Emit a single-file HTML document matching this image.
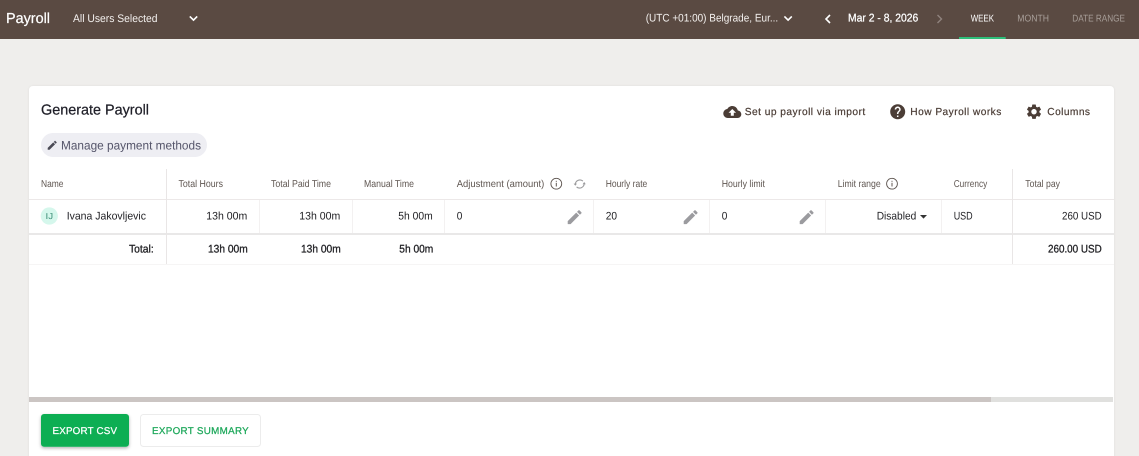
<!DOCTYPE html>
<html lang="en">
<head>
<meta charset="utf-8">
<title>Payroll</title>
<style>
html,body{margin:0;padding:0;width:1139px;height:456px;overflow:hidden;background:#efeeec}
svg{display:block}
text{font-family:"Liberation Sans",sans-serif;white-space:pre;text-rendering:geometricPrecision}
.h{font-size:10px;fill:#5f5651}
.r{font-size:11px;fill:#222226}
.m{stroke:currentColor;stroke-width:.25px}
.t{font-size:11px;fill:#222226;stroke:#222226;stroke-width:.3px}
.a{font-size:10.2px;fill:#4b3d36;stroke:#4b3d36;stroke-width:.2px}
.d{stroke:#f3f1f1;stroke-width:1}
</style>
</head>
<body>
<svg width="1139" height="456" viewBox="0 0 1139 456" xmlns="http://www.w3.org/2000/svg">
<defs>
<path id="pen" d="M3 17.25V21h3.75L17.81 9.94l-3.75-3.75L3 17.25zM20.71 7.04c.39-.39.39-1.02 0-1.41l-2.34-2.34c-.39-.39-1.02-.39-1.41 0l-1.83 1.83 3.75 3.75 1.83-1.83z"/>
<filter id="cs" x="-5%" y="-5%" width="110%" height="110%"><feDropShadow dx="0" dy="0" stdDeviation="1" flood-color="#000" flood-opacity=".07"/></filter>
<filter id="bs" x="-20%" y="-30%" width="140%" height="170%"><feDropShadow dx="0" dy="1.5" stdDeviation="1.5" flood-color="#000" flood-opacity=".3"/></filter>
</defs>

<rect width="1139" height="456" fill="#efeeec"/>

<!-- top bar -->
<rect width="1139" height="39" fill="#5a4a42"/>
<text x="6" y="23" font-size="14.5" fill="#fff" class="m" textLength="44" lengthAdjust="spacingAndGlyphs" style="color:#fff">Payroll</text>
<text x="73" y="22" font-size="11" fill="#f4f1ef" textLength="84.5" lengthAdjust="spacingAndGlyphs">All Users Selected</text>
<path d="M189.8 16.4l3.7 3.7 3.7-3.7" fill="none" stroke="#fff" stroke-width="1.6"/>
<text x="645.7" y="21.7" font-size="11" fill="#f4f1ef" textLength="132.5" lengthAdjust="spacingAndGlyphs">(UTC +01:00) Belgrade, Eur...</text>
<path d="M784.4 16.4l3.7 3.7 3.7-3.7" fill="none" stroke="#fff" stroke-width="1.6"/>
<path d="M830 15l-4 4 4 4" fill="none" stroke="#fff" stroke-width="1.6"/>
<text x="848" y="21.7" font-size="11.2" fill="#fff" class="m" textLength="70.3" lengthAdjust="spacingAndGlyphs" style="color:#fff">Mar 2 - 8, 2026</text>
<path d="M937.5 15l4 4-4 4" fill="none" stroke="#8f837d" stroke-width="1.4"/>
<text x="970.7" y="21.5" font-size="9.8" fill="#fff" textLength="23.3" lengthAdjust="spacingAndGlyphs">WEEK</text>
<text x="1017.3" y="21.5" font-size="9.8" fill="#a89f99" textLength="31.7" lengthAdjust="spacingAndGlyphs">MONTH</text>
<text x="1072.3" y="21.5" font-size="9.8" fill="#a89f99" textLength="52.7" lengthAdjust="spacingAndGlyphs">DATE RANGE</text>
<rect x="959" y="37" width="46.7" height="2" fill="#2dbf7a"/>

<!-- card -->
<rect x="29" y="86" width="1085" height="380" rx="4" fill="#fff" filter="url(#cs)"/>
<text x="41" y="114.3" font-size="14.5" fill="#1f1f28" class="m" textLength="108" lengthAdjust="spacingAndGlyphs" style="color:#1f1f28">Generate Payroll</text>

<rect x="41" y="133" width="166" height="24" rx="12" fill="#eeeef3"/>
<use href="#pen" transform="translate(46.2 139.3) scale(.5)" fill="#4a4a55"/>
<text x="61" y="149.5" font-size="12.3" fill="#55556a" textLength="140" lengthAdjust="spacingAndGlyphs">Manage payment methods</text>

<!-- actions -->
<path transform="translate(723.3 103) scale(.75)" fill="#4b3d36" d="M19.35 10.04C18.67 6.59 15.64 4 12 4 9.11 4 6.6 5.64 5.35 8.04 2.34 8.36 0 10.91 0 14c0 3.31 2.69 6 6 6h13c2.76 0 5-2.24 5-5 0-2.64-2.05-4.78-4.65-4.96zM14 13v4h-4v-4H7l5-5 5 5h-3z"/>
<text x="744.7" y="115" class="a" textLength="120.5">Set up payroll via import</text>
<path transform="translate(888.7 102.7) scale(.75)" fill="#4b3d36" d="M12 2C6.48 2 2 6.48 2 12s4.48 10 10 10 10-4.48 10-10S17.52 2 12 2zm1 17h-2v-2h2v2zm2.07-7.75l-.9.92C13.45 12.9 13 13.5 13 15h-2v-.5c0-1.1.45-2.1 1.17-2.83l1.24-1.26c.37-.36.59-.86.59-1.41 0-1.1-.9-2-2-2s-2 .9-2 2H8c0-2.21 1.79-4 4-4s4 1.79 4 4c0 .88-.36 1.68-.93 2.25z"/>
<text x="910.3" y="115" class="a" textLength="91">How Payroll works</text>
<path transform="translate(1025 102.7) scale(.75)" fill="#4b3d36" d="M19.14 12.94c.04-.3.06-.61.06-.94 0-.32-.02-.64-.07-.94l2.03-1.58c.18-.14.23-.41.12-.61l-1.92-3.32c-.12-.22-.37-.29-.59-.22l-2.39.96c-.5-.38-1.03-.7-1.62-.94l-.36-2.54c-.04-.24-.24-.41-.48-.41h-3.84c-.24 0-.43.17-.47.41l-.36 2.54c-.59.24-1.13.57-1.62.94l-2.39-.96c-.22-.08-.47 0-.59.22L2.74 8.87c-.12.21-.08.47.12.61l2.03 1.58c-.05.3-.09.63-.09.94s.02.64.07.94l-2.03 1.58c-.18.14-.23.41-.12.61l1.92 3.32c.12.22.37.29.59.22l2.39-.96c.5.38 1.03.7 1.62.94l.36 2.54c.05.24.24.41.48.41h3.84c.24 0 .44-.17.47-.41l.36-2.54c.59-.24 1.13-.56 1.62-.94l2.39.96c.22.08.47 0 .59-.22l1.92-3.32c.12-.22.07-.47-.12-.61l-2.01-1.58zM12 15.6c-1.98 0-3.6-1.62-3.6-3.6s1.62-3.6 3.6-3.6 3.6 1.62 3.6 3.6-1.62 3.6-3.6 3.6z"/>
<text x="1047.3" y="115" class="a" textLength="42.7">Columns</text>

<!-- table lines -->
<rect x="29" y="199" width="1085" height="1" fill="#ece8e8"/>
<rect x="29" y="233" width="1085" height="2" fill="#e9e8e8"/>
<rect x="29" y="264" width="1085" height="1" fill="#f6f5f5"/>
<rect x="166" y="169" width="1" height="95" fill="#e9e6e6"/>
<rect x="1012" y="169" width="1" height="95" fill="#e9e6e6"/>
<g class="d">
<path d="M259.5 200v33M352.5 200v33M444.5 200v33M593.5 200v33M709.5 200v33M825.5 200v33M941.5 200v33"/>
</g>

<!-- header -->
<text x="41" y="187" class="h" textLength="22.5" lengthAdjust="spacingAndGlyphs">Name</text>
<text x="178.5" y="187" class="h" textLength="44.5" lengthAdjust="spacingAndGlyphs">Total Hours</text>
<text x="271" y="187" class="h" textLength="60" lengthAdjust="spacingAndGlyphs">Total Paid Time</text>
<text x="364" y="187" class="h" textLength="50" lengthAdjust="spacingAndGlyphs">Manual Time</text>
<text x="456.7" y="187" class="h" textLength="87.6" lengthAdjust="spacingAndGlyphs">Adjustment (amount)</text>
<circle cx="556.3" cy="183.7" r="5.4" fill="none" stroke="#5f5651" stroke-width=".9"/>
<rect x="555.8" y="182.8" width="1" height="3.7" fill="#5f5651"/>
<rect x="555.8" y="180.8" width="1" height="1" fill="#5f5651"/>
<g fill="none" stroke="#9a9a9c" stroke-width="1.1">
<path d="M575.3 184.5a4.6 4.6 0 0 1 7.6-3.4"/>
<path d="M584.2 183.3a4.6 4.6 0 0 1-7.6 3.6"/>
</g>
<path d="M573.6 183.6h3.4l-1.7 2.2zM582.6 184.2h3.2l-1.6-2.2z" fill="#9a9a9c"/>
<text x="605.7" y="187" class="h" textLength="41.6" lengthAdjust="spacingAndGlyphs">Hourly rate</text>
<text x="721.7" y="187" class="h" textLength="43.3" lengthAdjust="spacingAndGlyphs">Hourly limit</text>
<text x="837.7" y="187" class="h" textLength="43" lengthAdjust="spacingAndGlyphs">Limit range</text>
<circle cx="892" cy="183.7" r="5.4" fill="none" stroke="#5f5651" stroke-width=".9"/>
<rect x="891.5" y="182.8" width="1" height="3.7" fill="#5f5651"/>
<rect x="891.5" y="180.8" width="1" height="1" fill="#5f5651"/>
<text x="953.7" y="187" class="h" textLength="33.6" lengthAdjust="spacingAndGlyphs">Currency</text>
<text x="1025.3" y="187" class="h" textLength="34.7" lengthAdjust="spacingAndGlyphs">Total pay</text>

<!-- row -->
<circle cx="49.3" cy="216" r="8.6" fill="#d5f7ec"/>
<text x="45.5" y="219.2" font-size="8.5" fill="#3d8f78" textLength="7.6" lengthAdjust="spacingAndGlyphs">IJ</text>
<text x="66.7" y="219.3" class="r" textLength="79.3" lengthAdjust="spacingAndGlyphs">Ivana Jakovljevic</text>
<text x="206.3" y="219.3" class="r" textLength="41" lengthAdjust="spacingAndGlyphs">13h 00m</text>
<text x="299.3" y="219.3" class="r" textLength="41" lengthAdjust="spacingAndGlyphs">13h 00m</text>
<text x="398.3" y="219.3" class="r" textLength="34.4" lengthAdjust="spacingAndGlyphs">5h 00m</text>
<text x="456.8" y="219.3" class="r" textLength="5.6" lengthAdjust="spacingAndGlyphs">0</text>
<use href="#pen" transform="translate(565.4 207.9) scale(.77)" fill="#9b9b9f"/>
<text x="605.7" y="219.3" class="r" textLength="11.3" lengthAdjust="spacingAndGlyphs">20</text>
<use href="#pen" transform="translate(681.4 207.9) scale(.77)" fill="#9b9b9f"/>
<text x="721.7" y="219.3" class="r" textLength="5.6" lengthAdjust="spacingAndGlyphs">0</text>
<use href="#pen" transform="translate(797.4 207.9) scale(.77)" fill="#9b9b9f"/>
<text x="876.7" y="219.3" class="r" textLength="39.6" lengthAdjust="spacingAndGlyphs">Disabled</text>
<path d="M920 215h7l-3.5 3.6z" fill="#333"/>
<text x="953.7" y="219.3" class="r" textLength="19" lengthAdjust="spacingAndGlyphs">USD</text>
<text x="1062" y="219.3" class="r" textLength="39.7" lengthAdjust="spacingAndGlyphs">260 USD</text>

<!-- total -->
<text x="129" y="252.7" class="t" textLength="24.7" lengthAdjust="spacingAndGlyphs">Total:</text>
<text x="208" y="252.7" class="t" textLength="39.7" lengthAdjust="spacingAndGlyphs">13h 00m</text>
<text x="301" y="252.7" class="t" textLength="39.7" lengthAdjust="spacingAndGlyphs">13h 00m</text>
<text x="399.3" y="252.7" class="t" textLength="34" lengthAdjust="spacingAndGlyphs">5h 00m</text>
<text x="1048" y="252.7" class="t" textLength="53.7" lengthAdjust="spacingAndGlyphs">260.00 USD</text>

<!-- scrollbar -->
<rect x="29" y="397" width="1084" height="5" fill="#e0e0de"/>
<rect x="29" y="397" width="962" height="5" fill="#cbc5c3"/>

<!-- buttons -->
<rect x="41" y="414" width="88" height="32.7" rx="3" fill="#0cae53" filter="url(#bs)"/>
<text x="52.5" y="434" font-size="9.8" fill="#fff" class="m" textLength="64.5" style="color:#fff">EXPORT CSV</text>
<rect x="140.5" y="414.5" width="120" height="32" rx="3" fill="#fff" stroke="#ececec"/>
<text x="152" y="434" font-size="9.8" fill="#1ea85b" class="m" textLength="96.7" style="color:#1ea85b">EXPORT SUMMARY</text>
</svg>
</body>
</html>
